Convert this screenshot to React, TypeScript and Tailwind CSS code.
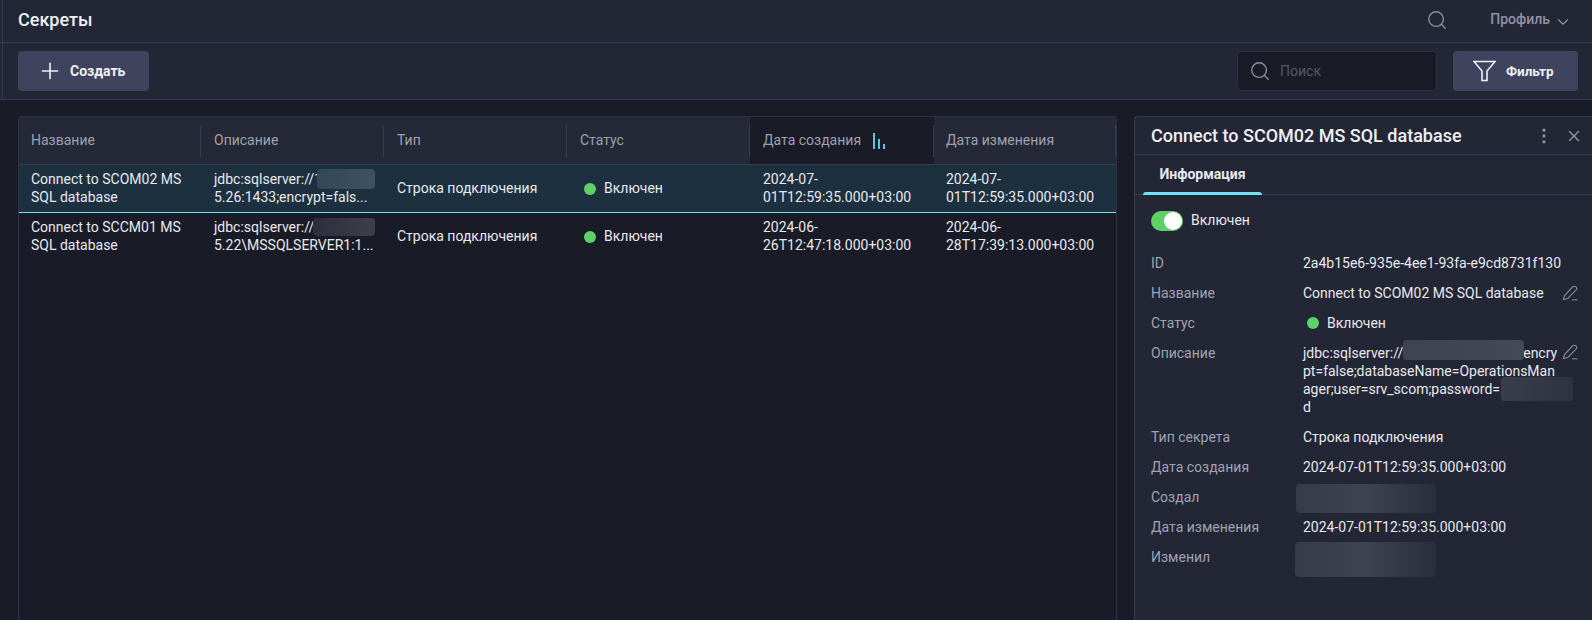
import { ChevronDown, EllipsisVertical, Plus, Search, X } from "lucide-react";

const columns = ["Название", "Описание", "Тип", "Статус", "Дата создания", "Дата изменения"];

const rows = [
  {
    name: ["Connect to SCOM02 MS", "SQL database"],
    desc: ["jdbc:sqlserver://1", "5.26:1433;encrypt=fals..."],
    created: ["2024-07-", "01T12:59:35.000+03:00"],
    changed: ["2024-07-", "01T12:59:35.000+03:00"],
    selected: true,
  },
  {
    name: ["Connect to SCCM01 MS", "SQL database"],
    desc: ["jdbc:sqlserver://", "5.22\\MSSQLSERVER1:1..."],
    created: ["2024-06-", "26T12:47:18.000+03:00"],
    changed: ["2024-06-", "28T17:39:13.000+03:00"],
    selected: false,
  },
];

function Lines({ lines }: { lines: string[] }) {
  return (
    <div className="-mt-[2px] leading-[18px] whitespace-nowrap">
      {lines.map((line) => (
        <div key={line}>{line}</div>
      ))}
    </div>
  );
}

function Dot() {
  return <span className="h-3 w-3 rounded-full bg-[#5fd068]" />;
}

function PenIcon() {
  return (
    <svg width="16" height="16" viewBox="0 0 16 16" fill="none" stroke="#85889a" strokeWidth="1.1" className="shrink-0">
      <path d="M1.5 14.5 L2.5 10.5 L10.5 2 C11.5 1 13 1 14 2 C15 3 15 4.2 14 5.2 L5.8 13.5 Z" />
      <path d="M10 14.8 H15.5" />
    </svg>
  );
}

function Blur({ className }: { className: string }) {
  return <span className={`absolute rounded-sm bg-linear-to-r ${className}`} />;
}

function Field({ label, children, h = "h-[30px]" }: { label: string; children: React.ReactNode; h?: string }) {
  return (
    <div className={`flex ${h}`}>
      <div className="w-[152px] shrink-0 leading-[30px] text-[#a0a3b1]">{label}</div>
      <div className="relative min-w-0 flex-1 leading-[30px] text-[#e8e9ee]">{children}</div>
    </div>
  );
}

export default function App() {
  return (
    <div className="flex h-[620px] w-[1592px] flex-col overflow-hidden bg-[#191b27] text-[14px] font-['Roboto',sans-serif] text-[#e8e9ee]">
      <header className="h-[43px] shrink-0 border-b border-[#383b52] bg-[#232635]">
        <div className="ml-[2px] flex h-full items-center border-l border-[#33364d] pr-5 pb-[3px] pl-[15px]">
          <h1 className="flex-1 text-[18px] leading-none font-medium text-[#eef0f4]">Секреты</h1>
          <Search size={22} strokeWidth={1.5} className="text-[#8b8e9e]" />
          <div className="ml-[42px] flex items-center gap-1 font-medium text-[#8f93a8]">
            Профиль
            <ChevronDown size={18} strokeWidth={1.5} className="mt-1" />
          </div>
        </div>
      </header>

      <div className="h-[57px] shrink-0 border-b border-[#383b52] bg-[#232635]">
        <div className="ml-[2px] flex h-full items-center border-l border-[#33364d] pr-[14px] pl-[15px]">
          <button className="flex h-10 w-[131px] items-center gap-[7px] rounded bg-[#3f435d] pl-[19px] font-bold text-[#eef0f4]">
            <Plus size={26} strokeWidth={1.5} />
            Создать
          </button>
          <div className="flex-1" />
          <div className="flex h-10 w-[200px] items-center gap-[9px] rounded border border-[#2d3041] bg-[#191b27] pl-[11px] text-[#565965]">
            <Search size={22} strokeWidth={1.5} className="text-[#8b8e9e]" />
            Поиск
          </div>
          <button className="ml-4 flex h-10 w-[125px] items-center gap-[10px] rounded bg-[#3f435d] pl-5 text-[13.5px] font-bold text-[#eef0f4]">
            <svg width="23" height="24" viewBox="0 0 23 24" fill="none" stroke="#f0f1f5" strokeWidth="1.6">
              <path d="M1 2.5 H22 L14 12 V21.5 L9 21.5 V12 Z" />
            </svg>
            Фильтр
          </button>
        </div>
      </div>

      <main className="flex min-h-0 flex-1 gap-[17px] pt-4 pl-[18px]">
        <section className="w-[1099px] shrink-0 rounded-t border border-b-0 border-[#2f3246]">
          <div className="grid h-[48px] grid-cols-[182px_183px_183px_183px_184px_1fr] border-b border-[#383b52] bg-[#252837] text-[#9ea1b0]">
            {columns.map((col, i) => (
              <div
                key={col}
                className={`flex items-center ${i === 0 || i === 5 ? "pl-[12px]" : "pl-[13px]"} ${
                  i === 4 ? "bg-[#191b27]" : ""
                }`}
              >
                <span>{col}</span>
                {i === 4 && (
                  <svg width="12" height="16" viewBox="0 0 12 16" className="ml-[12px]" fill="#5cc6dc">
                    <rect x="0" y="0" width="2" height="16" />
                    <rect x="5" y="6" width="2" height="10" />
                    <rect x="10" y="11" width="2" height="5" />
                  </svg>
                )}
                <span className="ml-auto h-8 w-px bg-[#383b52]" />
              </div>
            ))}
          </div>
          {rows.map((row) => (
            <div
              key={row.name[0]}
              className={`grid grid-cols-[182px_183px_183px_183px_184px_1fr] items-center text-[#e8e9ee] ${
                row.selected ? "h-[48px] border-b border-[#6fe3f7] bg-[#1d3040]" : "h-[47px]"
              }`}
            >
              <div className="pl-[12px]">
                <Lines lines={row.name} />
              </div>
              <div className="relative pl-[13px]">
                <Lines lines={row.desc} />
                <Blur
                  className={
                    row.selected
                      ? "top-[-3px] left-[116px] h-[20px] w-[58px] from-[#334757] to-[#3f5261]"
                      : "top-[-2px] left-[112px] h-[18px] w-[62px] from-[#2c2f3c] to-[#3e3f4a]"
                  }
                />
              </div>
              <div className="pl-[13px]">Строка подключения</div>
              <div className="flex items-center gap-2 pl-[17px]">
                <Dot />
                Включен
              </div>
              <div className="pl-[13px]">
                <Lines lines={row.created} />
              </div>
              <div className="pl-[12px]">
                <Lines lines={row.changed} />
              </div>
            </div>
          ))}
        </section>

        <aside className="min-w-0 flex-1 rounded-tl border border-r-0 border-b-0 border-[#383b52] bg-[#232635]">
          <div className="flex h-[38px] items-center border-b border-[#383b52] pr-[9px] pl-4">
            <h2 className="flex-1 text-[18px] font-medium whitespace-nowrap text-[#eef0f4]">
              Connect to SCOM02 MS SQL database
            </h2>
            <EllipsisVertical size={20} className="text-[#8b8e9e]" />
            <X size={18} className="ml-[11px] text-[#8b8e9e]" />
          </div>
          <div className="flex h-[40px] border-b border-[#383b52] pl-[8px]">
            <div className="relative flex w-[119px] items-center justify-center font-bold">
              Информация
              <span className="absolute right-0 bottom-[-1px] left-0 h-[3px] rounded-t-sm bg-[#6fe3f7]" />
            </div>
          </div>

          <div className="pr-[14px] pl-4">
            <div className="flex h-[53px] items-center gap-2 pb-[2px]">
              <span className="flex h-5 w-8 items-center justify-end rounded-full bg-[#5fd068] pr-px">
                <span className="h-[18px] w-[18px] rounded-full bg-white" />
              </span>
              Включен
            </div>
            <Field label="ID">2a4b15e6-935e-4ee1-93fa-e9cd8731f130</Field>
            <Field label="Название">
              <div className="flex h-full items-center justify-between">
                Connect to SCOM02 MS SQL database
                <PenIcon />
              </div>
            </Field>
            <Field label="Статус">
              <div className="flex h-full items-center gap-2 pl-1">
                <Dot />
                Включен
              </div>
            </Field>
            <Field label="Описание" h="h-[84px]">
              <div className="flex justify-between pt-[6px] leading-[18px]">
                <div className="whitespace-nowrap">
                  <div>
                    jdbc:sqlserver://
                    <span className="inline-block w-[120px]" />
                    encry
                  </div>
                  <div>pt=false;databaseName=OperationsMan</div>
                  <div>ager;user=srv_scom;password=</div>
                  <div>d</div>
                </div>
                <PenIcon />
              </div>
              <Blur className="top-[2px] left-[100px] h-[20px] w-[121px] from-[#3f4250] to-[#454857]" />
              <Blur className="top-[39px] left-[198px] h-[24px] w-[72px] from-[#3a3d4b] to-[#2f3240]" />
            </Field>
            <Field label="Тип секрета">Строка подключения</Field>
            <Field label="Дата создания">2024-07-01T12:59:35.000+03:00</Field>
            <Field label="Создал">
              <Blur className="top-[2px] left-[-7px] h-[29px] w-[140px] from-[#373a48] via-[#3f424f] to-[#2a2d3b]" />
            </Field>
            <Field label="Дата изменения">2024-07-01T12:59:35.000+03:00</Field>
            <Field label="Изменил">
              <Blur className="top-0 left-[-8px] h-[35px] w-[141px] from-[#373a48] via-[#3f424f] to-[#2a2d3b]" />
            </Field>
          </div>
        </aside>
      </main>
    </div>
  );
}
